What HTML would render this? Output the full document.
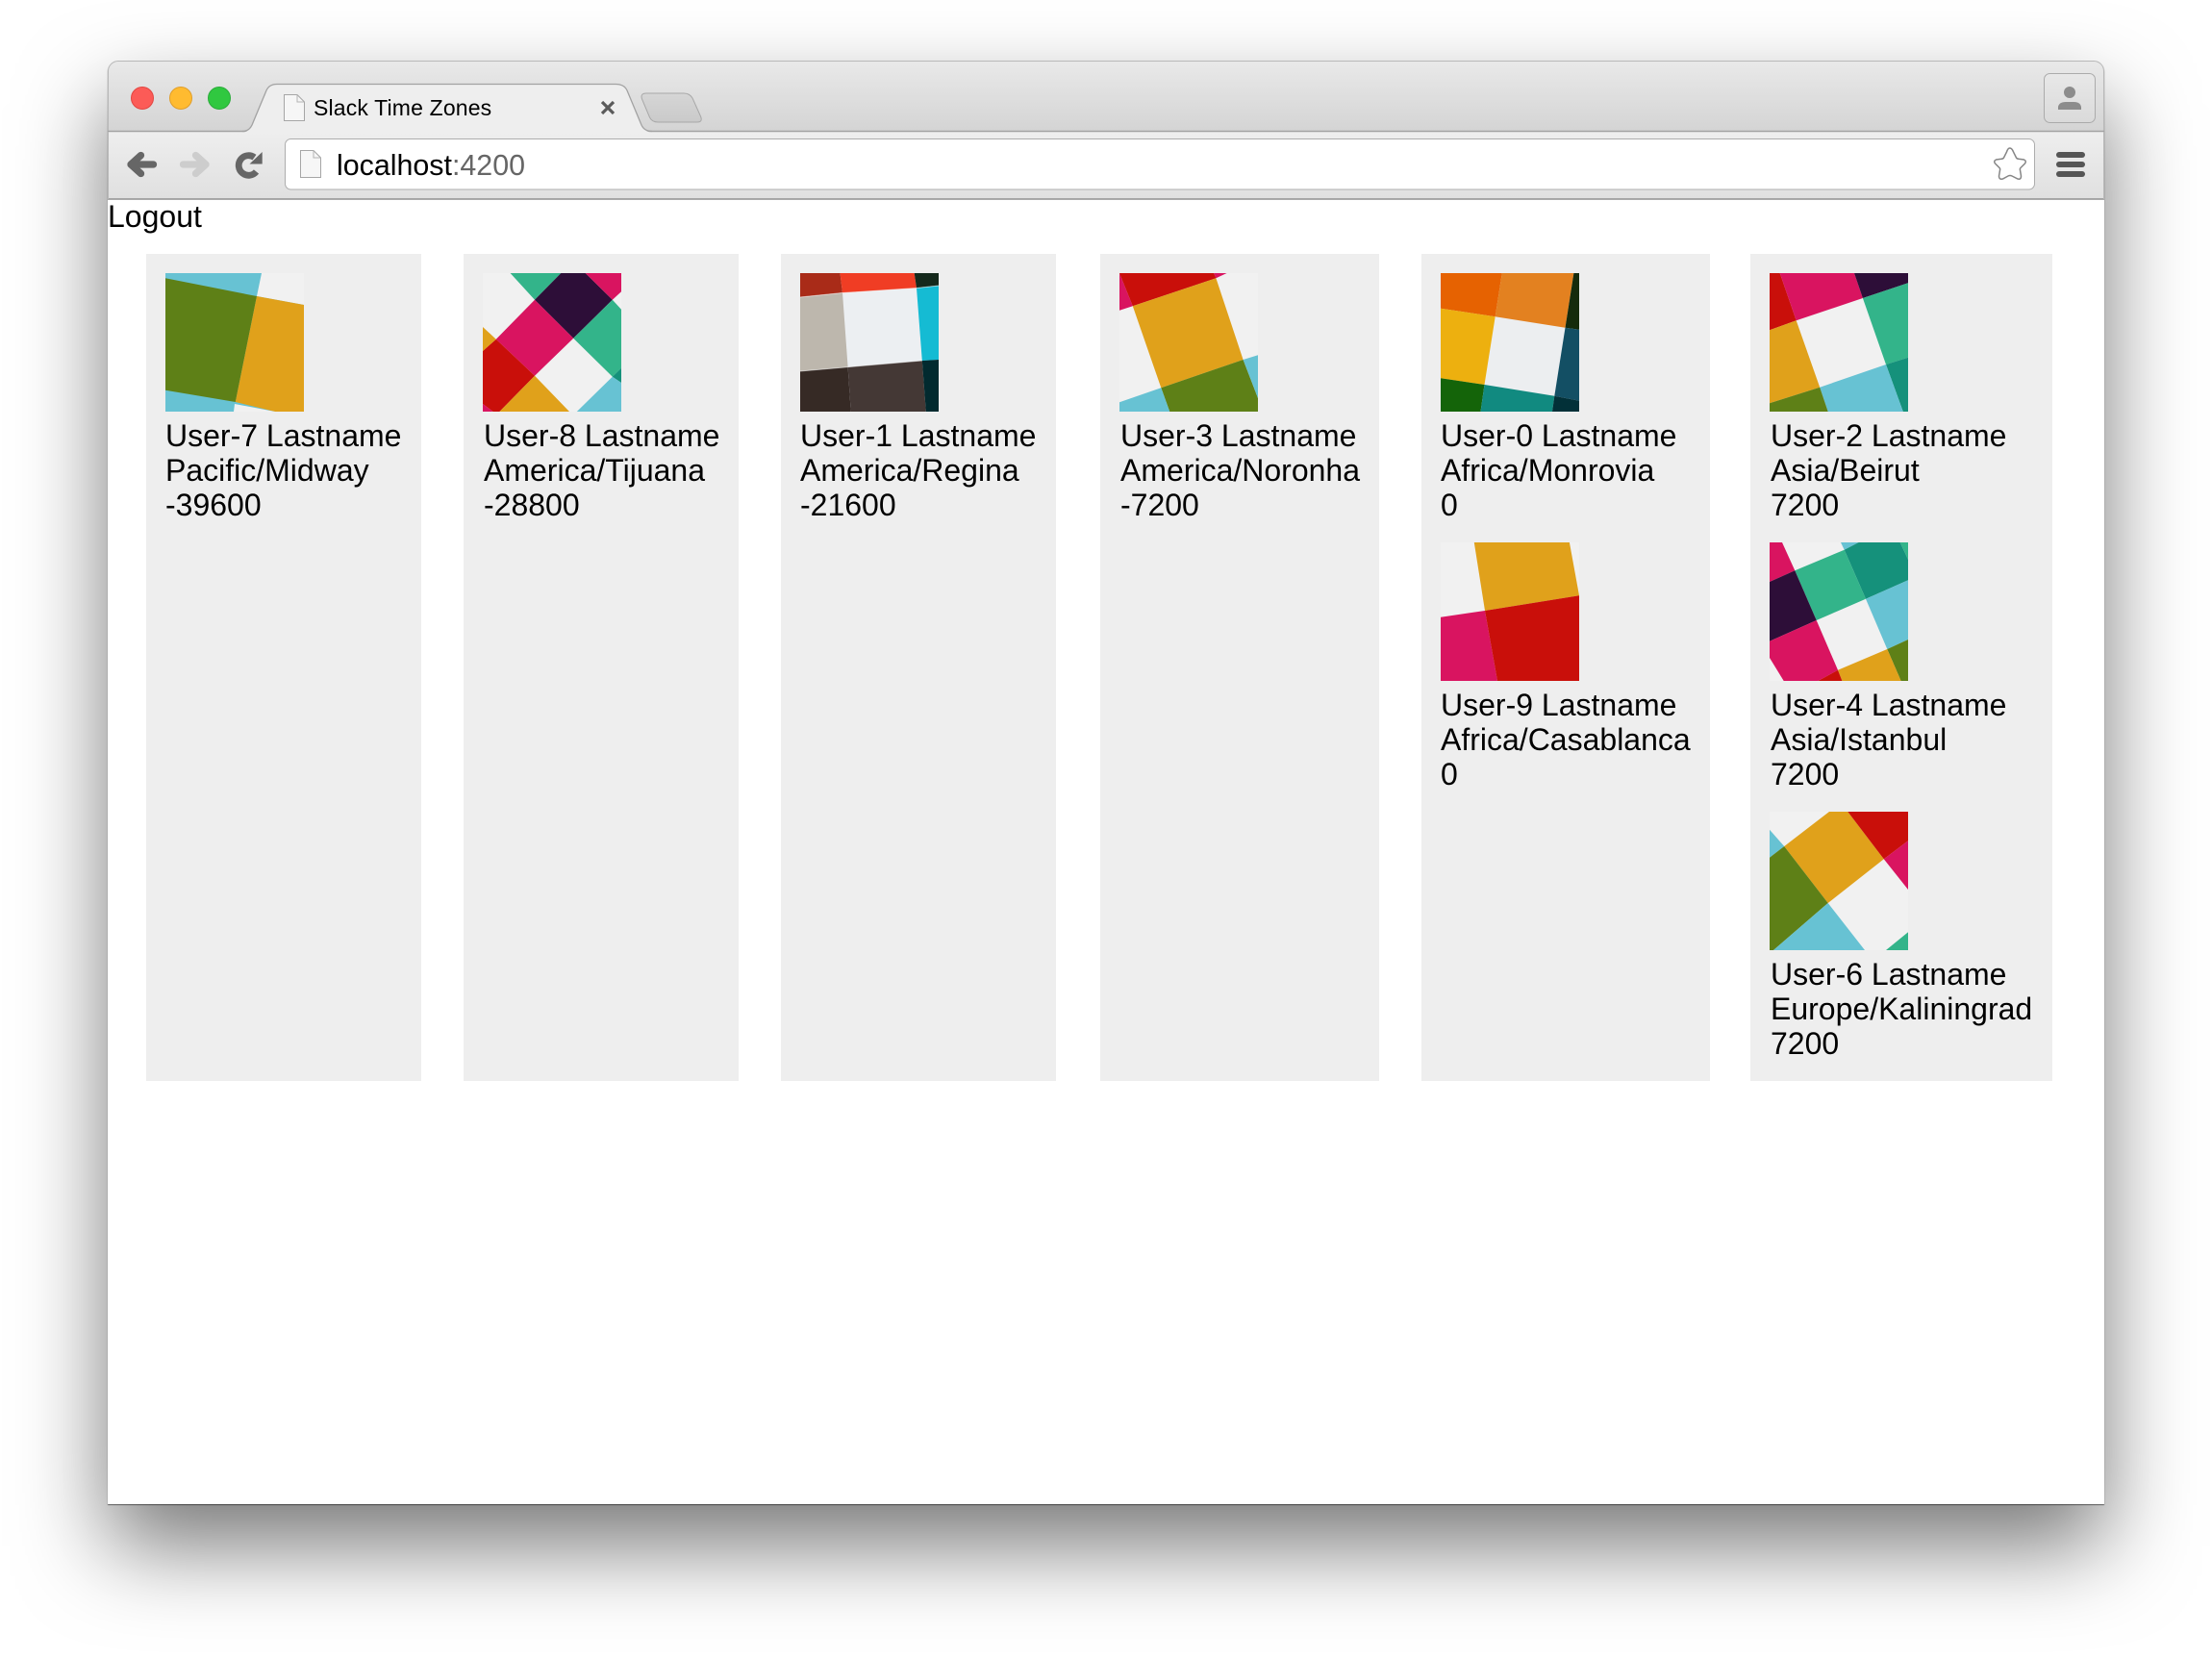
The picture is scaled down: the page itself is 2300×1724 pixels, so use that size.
<!DOCTYPE html>
<html><head><meta charset="utf-8"><title>Slack Time Zones</title>
<style>
html,body{margin:0;padding:0;background:#fff;width:2300px;height:1724px;overflow:hidden}
body{position:relative;font-family:"Liberation Sans",Arial,sans-serif;color:#000}
.win{position:absolute;left:112px;top:63px;width:2076px;height:1501px;border-radius:11px 11px 0 0;background:#fff;box-shadow:0 44px 92px rgba(0,0,0,.53),0 1px 1px rgba(0,0,0,.5)}
svg.chrome{position:absolute;left:0;top:0}
.t{position:absolute;white-space:nowrap}
.card{position:absolute;top:264px;height:860px;background:#eee}
.im{position:absolute;width:144px;height:144px;display:block}
.u{position:absolute;font-size:32px;line-height:36px;white-space:nowrap}
</style></head><body>
<div class="win"></div>
<svg class="chrome" width="2300" height="1724" viewBox="0 0 2300 1724">
<defs>
<linearGradient id="tb" x1="0" y1="0" x2="0" y2="1"><stop offset="0" stop-color="#e9e9e9"/><stop offset="1" stop-color="#d4d4d4"/></linearGradient>
<linearGradient id="bar" x1="0" y1="0" x2="0" y2="1"><stop offset="0" stop-color="#eeeeee"/><stop offset="1" stop-color="#e0e0e0"/></linearGradient>
<linearGradient id="nt" x1="0" y1="0" x2="0" y2="1"><stop offset="0" stop-color="#d6d6d6"/><stop offset="1" stop-color="#cacaca"/></linearGradient>
<linearGradient id="pb" x1="0" y1="0" x2="0" y2="1"><stop offset="0" stop-color="#e8e8e8"/><stop offset="1" stop-color="#dadada"/></linearGradient>
</defs>
<path d="M112 137V74a11 11 0 0 1 11-11H2177a11 11 0 0 1 11 11V137Z" fill="url(#tb)"/>
<path d="M112.500 137V74a10.500 10.500 0 0 1 10.500-10.500H2177a10.500 10.500 0 0 1 10.500 10.500V137" fill="none" stroke="#b8b8b8"/>
<rect x="112" y="137" width="2076" height="70" fill="url(#bar)"/>
<path d="M112 136.500H2188" stroke="#a2a2a2" stroke-width="1.400"/>
<path d="M112 207H2188" stroke="#8f8f8f" stroke-width="1.600"/>
<path d="M112.500 137V207M2187.500 137V207" stroke="#b8b8b8"/>
<!-- traffic lights -->
<circle cx="148" cy="102" r="11.500" fill="#fc5b57" stroke="#e24641"/>
<circle cx="188" cy="102" r="11.500" fill="#ffbb30" stroke="#e09e2a"/>
<circle cx="228" cy="102" r="11.500" fill="#30c840" stroke="#2aac3a"/>
<!-- tab -->
<path d="M252 138Q259 137 262 130L277 94Q280 87 288 87H640Q649 87 652 94L667 130Q670 137 678 138Z" fill="#eeeeee"/>
<path d="M252 136.500Q259 136.500 262 130L277 94Q280 87.500 288 87.500H640Q649 87.500 652 94L667 130Q670 136.500 678 136.500" fill="none" stroke="#a2a2a2" stroke-width="1.300"/>
<path d="M672 97H711Q717 97 720 102L728.500 121Q731 127 725 127H684Q678 127 675.500 122L667.500 103Q665.500 97 672 97Z" fill="url(#nt)" stroke="#a8a8a8"/>
<path d="M295.500 98.500H309L316.500 106V125.500H295.500Z" fill="#f6f6f6" stroke="#a6a6a6"/><path d="M309 98.500V106H316.500" fill="none" stroke="#b4b4b4"/>
<path d="M626 106L638 118M638 106L626 118" stroke="#5a5a5a" stroke-width="3.200"/>
<!-- nav -->
<path d="M159.500 171H138M146.500 161.500L136 171L146.500 180.500" fill="none" stroke="#666" stroke-width="7.300" stroke-linecap="round" stroke-linejoin="round"/>
<path d="M190.500 171H212M203.500 161.500L214 171L203.500 180.500" fill="none" stroke="#cdcdcd" stroke-width="7.300" stroke-linecap="round" stroke-linejoin="round"/>
<path d="M264.500 163.600A10.300 10.300 0 1 0 266.500 178.500" fill="none" stroke="#666" stroke-width="6.800"/>
<path d="M272.700 158V170.500H259.500Z" fill="#666"/>
<!-- url box -->
<rect x="296.500" y="144.500" width="1819" height="52.500" rx="6" fill="#fff" stroke="#adadad"/>
<path d="M312.500 156.500H326L333.500 164V184.500H312.500Z" fill="#f6f6f6" stroke="#a6a6a6"/><path d="M326 156.500V164H333.500" fill="none" stroke="#b4b4b4"/>
<path d="M2089.700 154Q2092 154 2093.500 158L2096.500 164Q2097 165 2099 165.300L2104.500 166Q2107.500 167.500 2105.500 170L2101 174.500Q2100 175.500 2100.500 177L2101.500 183Q2101.500 187 2098 186L2092 183Q2090 182 2088 183L2082.500 186Q2078.500 187 2078.500 183L2079.500 177Q2080 175.500 2079 174.500L2074.500 170Q2072.500 167.500 2075.500 166L2081 165.300Q2083 165 2083.500 164L2086.500 158Q2087.800 154 2089.700 154Z" fill="#fff" stroke="#868686" stroke-width="1.500"/>
<rect x="2138" y="158" width="30" height="6" rx="3" fill="#555"/>
<rect x="2138" y="168" width="30" height="6" rx="3" fill="#555"/>
<rect x="2138" y="178" width="30" height="6" rx="3" fill="#555"/>
<!-- profile -->
<rect x="2125.500" y="76.500" width="53" height="51" rx="6" fill="url(#pb)" stroke="#ababab"/>
<circle cx="2152" cy="96" r="6" fill="#8c8c8c"/>
<path d="M2140 114V111Q2141 106 2148 106H2156Q2163 106 2164 111V114Z" fill="#8c8c8c"/>
</svg>

<div class="t" style="left:326px;top:99px;font-size:23px;line-height:26px;letter-spacing:.16px">Slack Time Zones</div>
<div class="t" style="left:350px;top:155px;font-size:30.400px;line-height:34px">localhost<span style="color:#666">:4200</span></div>
<div class="t" style="left:112px;top:207px;font-size:32px;line-height:36px">Logout</div>

<div class="card" style="left:152px;width:286px"></div>
<div class="card" style="left:482px;width:286px"></div>
<div class="card" style="left:812px;width:286px"></div>
<div class="card" style="left:1144px;width:290px"></div>
<div class="card" style="left:1478px;width:300px"></div>
<div class="card" style="left:1820px;width:314px"></div>

<!-- U7 -->
<svg class="im" style="left:172px;top:284px" viewBox="0 0 144 144"><rect width="144" height="144" fill="#67c2d3"/>
<path d="M100 0H144V33L95 24Z" fill="#f1f1f1"/><path d="M0 5.300L95 24L72.800 134L0 121.700Z" fill="#5e8017"/><path d="M95 24L144 33V144H114L72.800 134Z" fill="#e0a11b"/><path d="M72 136L114 144H71Z" fill="#f1f1f1"/></svg>
<!-- U8 -->
<svg class="im" style="left:502px;top:284px" viewBox="0 0 144 144"><rect width="144" height="144" fill="#f1f1f1"/>
<path d="M28.600 0H81.300L54 27.700Z" fill="#33b48a"/><path d="M81.300 0H106.700L134.800 27.700L94.200 67.700L54 27.700Z" fill="#2d0e38"/><path d="M106.700 0H144V19.300L134.800 27.700Z" fill="#d91460"/><path d="M134.800 27.700L144 37.700V98.700L134.800 107.700L94.200 67.700Z" fill="#33b48a"/><path d="M144 98.700V114L134.800 107.700Z" fill="#15917b"/><path d="M54 27.700L94.200 67.700L54 106.700L13.800 68.700Z" fill="#d91460"/><path d="M134.800 107.700L144 114V144H97.800Z" fill="#67c2d3"/><path d="M13.800 68.700L54 106.700L17.400 144H10.700L0 136V81Z" fill="#c90f0a"/><path d="M0 56L13.800 68.700L0 81Z" fill="#e0a11b"/><path d="M54 106.700L90 144H17.400Z" fill="#e0a11b"/><path d="M0 136L10.700 144H0Z" fill="#d91460"/></svg>
<!-- U1 -->
<svg class="im" style="left:832px;top:284px" viewBox="0 0 144 144"><rect width="144" height="144" fill="#eceff2"/>
<path d="M0 0H41.500L44 20.500L0 25Z" fill="#a92b18"/><path d="M41.500 0H118.700L121 15.500L44 20.500Z" fill="#f03d24"/><path d="M118.700 0H144V13L121 15.500Z" fill="#15291c"/><path d="M0 25L44 20.500L49.600 97.700L0 102Z" fill="#bdb7ad"/><path d="M121 15.500L144 13V90L126.800 91Z" fill="#15bbd3"/><path d="M0 102L49.600 97.700L52.700 144H0Z" fill="#362a25"/><path d="M49.600 97.700L126.800 91L130.800 144H52.700Z" fill="#443835"/><path d="M126.800 91L144 90V144H130.800Z" fill="#022a2f"/><path d="M0 25L44 20.500L121 15.500L144 13M0 102L49.600 97.700L126.800 91" fill="none" stroke="#fff" stroke-opacity=".55" stroke-width=".9"/></svg>
<!-- U3 -->
<svg class="im" style="left:1164px;top:284px" viewBox="0 0 144 144"><rect width="144" height="144" fill="#f1f1f1"/>
<path d="M0 0L13.800 34.300L0 38.700Z" fill="#d91460"/><path d="M98 0H111.600L100.400 5.300Z" fill="#d91460"/><path d="M0 0H98L100.400 5.300L13.800 34.300Z" fill="#c90f0a"/><path d="M13.800 34.300L100.400 5.300L128.600 90L43.300 119.300Z" fill="#e0a11b"/><path d="M43.300 119.300L128.600 90L144 130V144H52.200Z" fill="#5e8017"/><path d="M128.600 90L144 85.300V130Z" fill="#67c2d3"/><path d="M0 134.300L43.300 119.300L52.200 144H0Z" fill="#67c2d3"/></svg>
<!-- U0 -->
<svg class="im" style="left:1498px;top:284px" viewBox="0 0 144 144"><rect width="144" height="144" fill="#eceef0"/>
<path d="M0 0H63.800L56.700 45.300L0 36.700Z" fill="#e66201"/><path d="M63.800 0H138.400L129.500 56.700L56.700 45.300Z" fill="#e38120"/><path d="M138.400 0H144V58.700L129.500 56.700Z" fill="#152b0c"/><path d="M0 36.700L56.700 45.300L45.500 116L0 109.300Z" fill="#edb00f"/><path d="M129.500 56.700L144 58.700V132.700L118.300 127.700Z" fill="#134f64"/><path d="M0 109.300L45.500 116L41.500 144H0Z" fill="#146409"/><path d="M45.500 116L118.300 127.700L116 144H41.500Z" fill="#118a80"/><path d="M118.300 127.700L144 132.700V144H116Z" fill="#023038"/></svg>
<!-- U2 -->
<svg class="im" style="left:1840px;top:284px" viewBox="0 0 144 144"><rect width="144" height="144" fill="#f1f1f1"/>
<path d="M0 0H10.700L27.700 49.300L0 59.300Z" fill="#c90f0a"/><path d="M10.700 0H88L96.900 26L27.700 49.300Z" fill="#d91460"/><path d="M88 0H144V10.300L96.900 26Z" fill="#2d0e38"/><path d="M96.900 26L144 10.300V87.700L121 95Z" fill="#33b48a"/><path d="M121 95L144 87.700V144H138.800Z" fill="#15917b"/><path d="M52.200 118.700L121 95L138.800 144H60.700Z" fill="#67c2d3"/><path d="M0 59.300L27.700 49.300L52.200 118.700L0 135.300Z" fill="#e0a11b"/><path d="M0 135.300L52.200 118.700L60.700 144H0Z" fill="#5e8017"/></svg>
<!-- U9 -->
<svg class="im" style="left:1498px;top:564px" viewBox="0 0 144 144"><rect width="144" height="144" fill="#f1f1f1"/>
<path d="M34.800 0H133.900L144 55.300L46 71Z" fill="#e0a11b"/><path d="M0 77.700L46 71L59 144H0Z" fill="#d91460"/><path d="M46 71L144 55.300V144H59Z" fill="#c90f0a"/></svg>
<!-- U4 -->
<svg class="im" style="left:1840px;top:564px" viewBox="0 0 144 144"><rect width="144" height="144" fill="#f1f1f1"/>
<path d="M0 0H13L26.300 29.300L0 41Z" fill="#d91460"/><path d="M74 0H92.600L77.700 7.700Z" fill="#67c2d3"/><path d="M92.600 0H135.700L144 17.700V39.300L100 58.700L77.700 7.700Z" fill="#15917b"/><path d="M135.700 0H144V17.700Z" fill="#33b48a"/><path d="M26.300 29.300L77.700 7.700L100 58.700L48.700 81Z" fill="#33b48a"/><path d="M0 41L26.300 29.300L48.700 81L0 102.700Z" fill="#2d0e38"/><path d="M0 102.700L48.700 81L71 132.700L50.400 144H14.700L0 120Z" fill="#d91460"/><path d="M100 58.700L144 39.300V101L122.300 111Z" fill="#67c2d3"/><path d="M122.300 111L144 101V144H136.600Z" fill="#5e8017"/><path d="M71 132.700L122.300 111L136.600 144H75.400Z" fill="#e0a11b"/><path d="M71 132.700L75.400 144H50.400Z" fill="#c90f0a"/></svg>
<!-- U6 -->
<svg class="im" style="left:1840px;top:844px" viewBox="0 0 144 144"><rect width="144" height="144" fill="#f1f1f1"/>
<path d="M0 18.700L15.200 36L0 47.700Z" fill="#67c2d3"/><path d="M62 0H81.300L118.800 49.300L60.700 95L15.200 36Z" fill="#e0a11b"/><path d="M81.300 0H144V30.300L118.800 49.300Z" fill="#c90f0a"/><path d="M118.800 49.300L144 30.300V81Z" fill="#d91460"/><path d="M0 47.700L15.200 36L60.700 95L4 144H0Z" fill="#5e8017"/><path d="M60.700 95L99 144H4Z" fill="#67c2d3"/><path d="M144 125.300V144H121Z" fill="#33b48a"/></svg>

<div class="u" style="left:172px;top:435px">User-7 Lastname<br>Pacific/Midway<br>-39600</div>
<div class="u" style="left:503px;top:435px">User-8 Lastname<br>America/Tijuana<br>-28800</div>
<div class="u" style="left:832px;top:435px">User-1 Lastname<br>America/Regina<br>-21600</div>
<div class="u" style="left:1165px;top:435px">User-3 Lastname<br>America/Noronha<br>-7200</div>
<div class="u" style="left:1498px;top:435px">User-0 Lastname<br>Africa/Monrovia<br>0</div>
<div class="u" style="left:1841px;top:435px">User-2 Lastname<br>Asia/Beirut<br>7200</div>
<div class="u" style="left:1498px;top:715px">User-9 Lastname<br>Africa/Casablanca<br>0</div>
<div class="u" style="left:1841px;top:715px">User-4 Lastname<br>Asia/Istanbul<br>7200</div>
<div class="u" style="left:1841px;top:995px">User-6 Lastname<br>Europe/Kaliningrad<br>7200</div>
</body></html>
